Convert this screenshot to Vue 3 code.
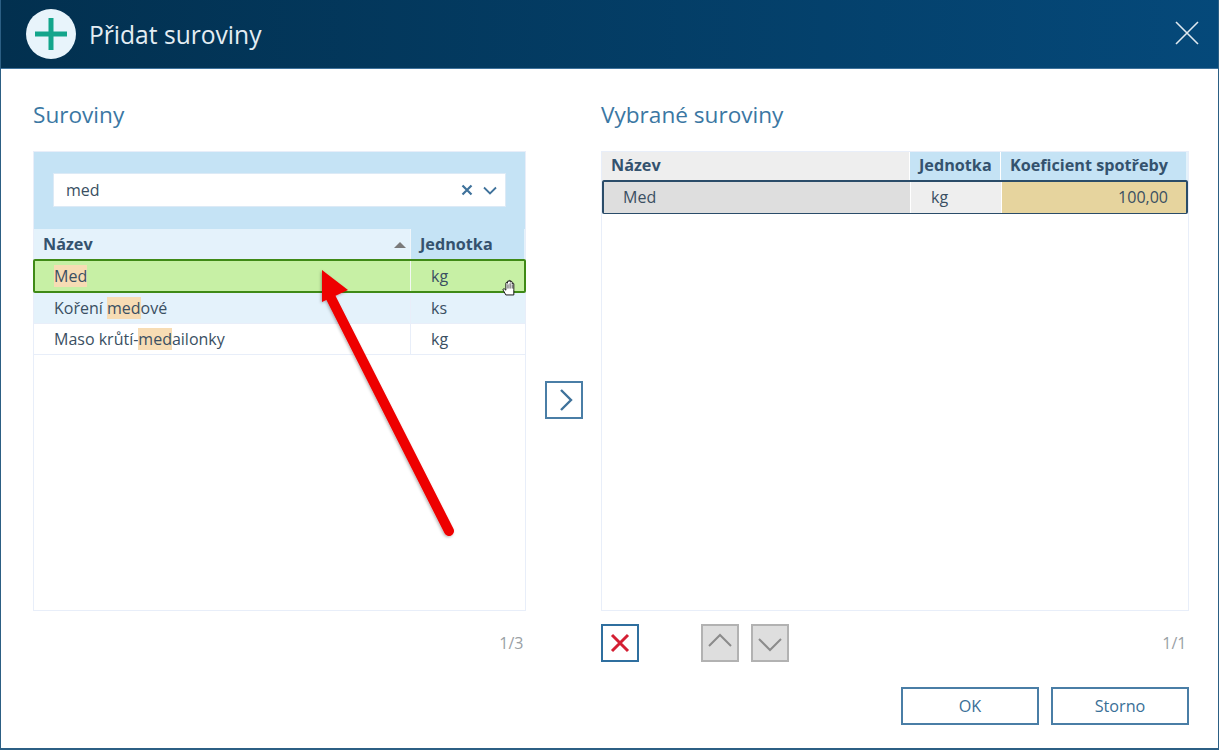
<script setup>
const results = [
  { parts: [['Med', true]], unit: 'kg', cls: 'selected' },
  { parts: [['Koření ', false], ['med', true], ['ové', false]], unit: 'ks', cls: 'odd' },
  { parts: [['Maso krůtí-', false], ['med', true], ['ailonky', false]], unit: 'kg', cls: '' },
]
</script>

<template>
  <div class="window">
    <header class="titlebar">
      <span class="title-icon">
        <svg width="50" height="50" viewBox="0 0 50 50"><path d="M25 9v32M9 25h32" stroke="#13a58b" stroke-width="5" fill="none" /></svg>
      </span>
      <h1 class="title">Přidat suroviny</h1>
      <svg class="close" width="26" height="26" viewBox="0 0 26 26"><path d="M2 2l22 22M24 2L2 24" stroke="#dfe9f0" stroke-width="1.6" fill="none" /></svg>
    </header>

    <main class="body">
      <section class="col col-left">
        <h2 class="heading">Suroviny</h2>
        <div class="panel">
          <div class="filter">
            <div class="input">
              <span class="input-text">med</span>
              <svg width="12" height="12" viewBox="0 0 12 12" class="clear"><path d="M1.500 1.500l9 9M10.500 1.500l-9 9" stroke="#3f729b" stroke-width="2.200" fill="none" /></svg>
              <svg width="14" height="9" viewBox="0 0 14 9"><path d="M1 1.500l6 6 6-6" stroke="#3f729b" stroke-width="1.800" fill="none" /></svg>
            </div>
          </div>
          <div class="grid-head left-grid">
            <div class="hc hc-name">Název<span class="sort"></span></div>
            <div class="hc hc-unit">Jednotka</div>
          </div>
          <div v-for="r in results" :key="r.parts.map(p => p[0]).join('')" class="row left-grid" :class="r.cls">
            <div class="cell cell-name"><span v-for="(p, i) in r.parts" :key="i" :class="{ hit: p[1] }">{{ p[0] }}</span></div>
            <div class="cell cell-unit">{{ r.unit }}</div>
          </div>
        </div>
        <div class="foot"><span class="count">1/3</span></div>
      </section>

      <div class="transfer">
        <button class="icon-btn">
          <svg class="chev-right" width="14" height="22" viewBox="0 0 14 22"><path d="M2 1l10 10L2 21" stroke="#3f729b" stroke-width="2.400" fill="none" /></svg>
        </button>
      </div>

      <section class="col col-right">
        <h2 class="heading">Vybrané suroviny</h2>
        <div class="panel">
          <div class="grid-head right-grid rh">
            <div class="hc r-name">Název</div>
            <div class="hc r-blue">Jednotka</div>
            <div class="hc r-blue">Koeficient spotřeby</div>
          </div>
          <div class="row right-grid chosen">
            <div class="cell c-name">Med</div>
            <div class="cell c-unit">kg</div>
            <div class="cell c-val">100,00</div>
          </div>
        </div>
        <div class="foot tools">
          <button class="icon-btn del">
            <svg width="20" height="20" viewBox="0 0 20 20"><path d="M2 2l16 16M18 2L2 18" stroke="#d41f33" stroke-width="3" fill="none" /></svg>
          </button>
          <button class="icon-btn off up">
            <svg class="lift" width="26" height="14" viewBox="0 0 26 14"><path d="M2 13L13 2l11 11" stroke="#8b8b8b" stroke-width="2" fill="none" /></svg>
          </button>
          <button class="icon-btn off">
            <svg class="drop" width="26" height="14" viewBox="0 0 26 14"><path d="M2 1l11 11L24 1" stroke="#8b8b8b" stroke-width="2" fill="none" /></svg>
          </button>
          <span class="count push">1/1</span>
        </div>
        <div class="actions">
          <button class="btn">OK</button>
          <button class="btn">Storno</button>
        </div>
      </section>
    </main>

    <svg class="arrow" width="170" height="300" viewBox="0 0 170 300">
      <defs>
        <filter id="sh" x="-20%" y="-20%" width="140%" height="140%"><feDropShadow dx="-1" dy="1" stdDeviation="1.500" flood-color="#000" flood-opacity=".3" /></filter>
      </defs>
      <g filter="url(#sh)">
        <path d="M149 281L30 46" stroke="#ee0000" stroke-width="10" stroke-linecap="round" fill="none" />
        <path d="M22 20L48 40 22 52z" fill="#ee0000" />
      </g>
    </svg>

    <svg class="hand" width="17" height="17" viewBox="0 0 13 16">
      <path d="M4 15L1.500 10.500c-.6-1 .6-1.800 1.400-1L4 10.500V4c0-1 1.300-1 1.500 0V2.500c0-1 1.500-1 1.500 0V2c0-1 1.500-1 1.500 0v1c.2-1 1.500-1 1.500 0v1.500c.2-1 1.500-.8 1.500.2V10L11.500 15z" fill="#fff" stroke="#111" stroke-width=".9" />
      <path d="M6 5v4M8 4v5M10 5v4" stroke="#111" stroke-width=".7" />
    </svg>
  </div>
</template>

<style scoped>
.window {
  position: relative;
  box-sizing: border-box;
  width: 1219px;
  height: 750px;
  display: flex;
  flex-direction: column;
  background: #fff;
  border: 1px solid #2c5f84;
  border-top: 0;
  border-bottom: 2px solid #2c5f84;
  font-family: "Open Sans", sans-serif;
  overflow: hidden;
  color: #3a4f62;
}
.titlebar {
  flex: none;
  height: 69px;
  display: flex;
  align-items: center;
  padding: 0 18px 0 25px;
  background: linear-gradient(90deg, #02304f 0%, #05497a 100%);
  border-bottom: 1px solid #3f729b;
  box-sizing: border-box;
}
.title-icon {
  width: 50px;
  height: 50px;
  border-radius: 50%;
  background: #e8f4fb;
  display: flex;
}
.title {
  margin: 0 0 0 13px;
  font-size: 24.600px;
  font-weight: 400;
  color: #e4edf3;
  flex: 1;
}
.close { flex: none; margin-top: -2px; }
.body {
  flex: 1;
  display: flex;
  padding: 0 29px 0 32px;
  min-height: 0;
}
.col { display: flex; flex-direction: column; }
.col-left { width: 493px; }
.col-right { width: 588px; }
.transfer {
  width: 75px;
  box-sizing: border-box;
  padding: 312px 0 0 19px;
}
.heading {
  margin: 0;
  height: 82px;
  padding-top: 31px;
  box-sizing: border-box;
  font-size: 22.600px;
  line-height: 30px;
  font-weight: 400;
  color: #3b77a3;
}
.panel {
  height: 460px;
  box-sizing: border-box;
  border: 1px solid #e8eef9;
  font-size: 16px;
}
.filter {
  height: 77px;
  box-sizing: border-box;
  background: #c5e3f5;
  padding: 21px 19px 0;
}
.input {
  height: 34px;
  background: #fff;
  display: flex;
  align-items: center;
  padding: 0 8px 0 12px;
  gap: 10px;
  border: 1px solid #dceaf6;
  box-sizing: border-box;
}
.input-text { flex: 1; }
.left-grid { display: grid; grid-template-columns: 376px 115px; }
.right-grid { display: grid; grid-template-columns: 307px 91px 186px; }
.grid-head { height: 30px; background: #e4f2fb; }
.hc {
  font-weight: 700;
  font-size: 16.200px;
  line-height: 30px;
  padding-left: 9px;
  color: #34526e;
  white-space: nowrap;
}
.hc-name { position: relative; }
.hc-unit {
  background: #c5e3f5;
  border-left: 1px solid #f0f6fb;
  margin-right: 1px;
}
.sort {
  position: absolute;
  right: 4px;
  top: 13px;
  width: 0;
  height: 0;
  border: 6px solid transparent;
  border-top: 0;
  border-bottom: 6px solid #7a7a7a;
}
.row { height: 31px; line-height: 30px; border-bottom: 1px solid #e8eef9; box-sizing: border-box; }
.row.odd { background: #e4f2fb; }
.row.selected {
  height: 34px;
  background: #c7f0a5;
  border: 2px solid #3f8a16;
  border-radius: 2px;
  margin: 0 0 0 -1px;
  width: 493px;
  grid-template-columns: 375px 116px;
  line-height: 30px;
}
.cell { white-space: nowrap; }
.cell-name { padding-left: 20px; }
.row.selected .cell-name { padding-left: 19px; }
.cell-unit { padding-left: 20px; border-left: 1px solid #e8eef9; }
.row.selected .cell-unit { border-left: 1px solid #f3f8f3; }
.hit { background: #f7dcb4; }
.foot { height: 64px; display: flex; justify-content: flex-end; align-items: center; }
.count { font-size: 16px; color: #9a9fa5; padding: 0 2.500px 0 0; }
.tools { justify-content: flex-start; margin-bottom: 12px; }
.push { margin-left: auto; }
.icon-btn {
  width: 38px;
  height: 38px;
  padding: 0;
  box-sizing: border-box;
  background: #fff;
  border: 2px solid #4a7ea6;
  display: flex;
  align-items: center;
  justify-content: center;
  flex: none;
}
.icon-btn.del { border-color: #2f6f9f; }
.icon-btn.off { background: #dedede; border-color: #b2b2b2; margin-left: 12px; }
.icon-btn.up { margin-left: 62px; }
.chev-right { margin-left: 4px; }
.lift { margin-top: -6px; }
.drop { margin-top: 4px; }
.rh { height: 28px; }
.rh .hc { line-height: 27px; }
.r-name { background: #eeeeee; }
.r-blue { background: #c5e3f5; border-left: 1px solid #fff; }
.chosen {
  height: 34px;
  margin-left: 0;
  border: 2px solid #2a4c69;
  border-radius: 2px;
  line-height: 31px;
  width: 586px;
  grid-template-columns: 306px 91px 185px;
}
.c-name { background: #dedede; padding-left: 19px; }
.c-unit { background: #eeeeee; border-left: 1px solid #fff; padding-left: 20px; }
.c-val { background: #e6d49e; border-left: 1px solid #fff; text-align: right; padding-right: 18px; }
.actions {
  display: flex;
  justify-content: flex-end;
  gap: 12px;
}
.btn {
  width: 138px;
  height: 38px;
  box-sizing: border-box;
  background: #fff;
  border: 2px solid #4a7ea6;
  font: 400 16.200px "Open Sans", sans-serif;
  color: #3a6f97;
  padding: 0;
}
.arrow { position: absolute; left: 299px; top: 250px; }
.hand { position: absolute; left: 499px; top: 279px; }
</style>
